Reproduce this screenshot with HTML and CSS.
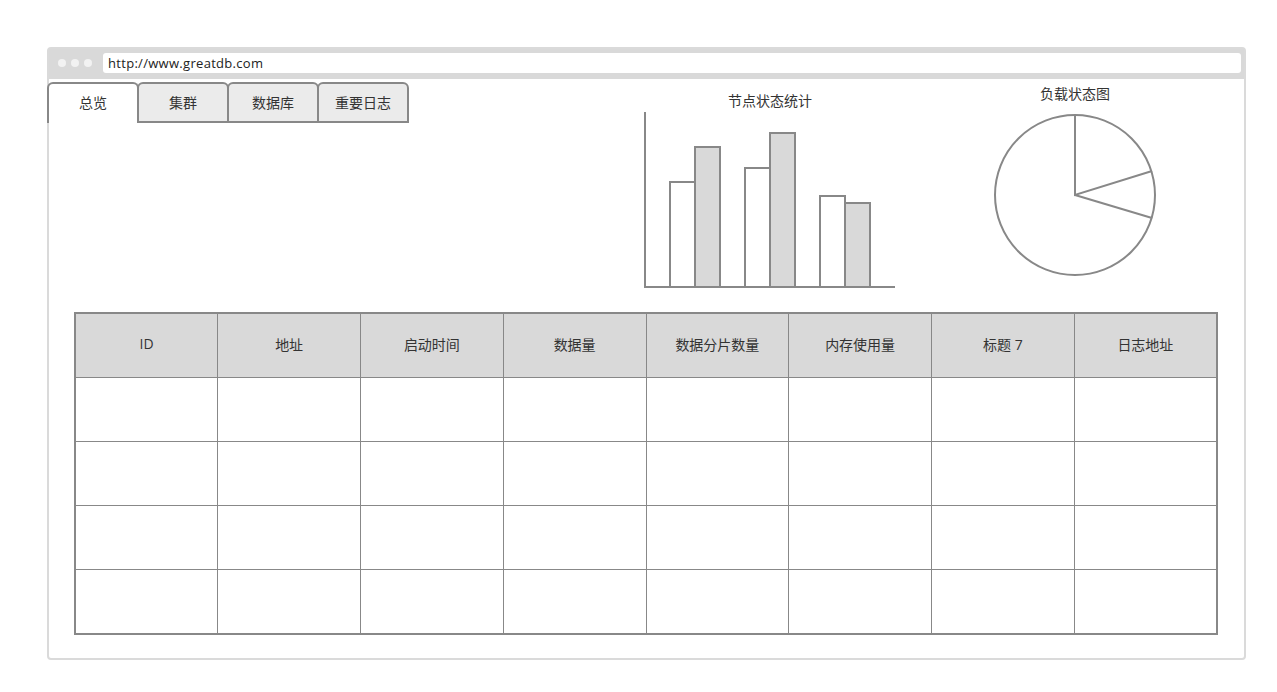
FILE: index.html
```html
<!DOCTYPE html>
<html lang="zh">
<head>
<meta charset="utf-8">
<title>GreatDB</title>
<link rel="stylesheet" href="styles.css">
</head>
<body>
<div class="frame">
  <div class="topbar">
    <div class="dots"><span class="dot"></span><span class="dot"></span><span class="dot"></span></div>
    <div class="url">http://www.greatdb.com</div>
  </div>
  <div class="content">
    <div class="top">
      <div class="tabs">
        <div class="tab active">总览</div>
        <div class="tab">集群</div>
        <div class="tab">数据库</div>
        <div class="tab">重要日志</div>
      </div>
      <div class="barchart">
        <div class="title">节点状态统计</div>
        <svg class="bars" width="260" height="180" viewBox="0 0 260 180">
          <g stroke="#888" stroke-width="2">
            <rect x="30" y="72" width="25" height="105" fill="#fff"/>
            <rect x="55" y="37" width="25" height="140" fill="#d9d9d9"/>
            <rect x="105" y="58" width="25" height="119" fill="#fff"/>
            <rect x="130" y="23" width="25" height="154" fill="#d9d9d9"/>
            <rect x="180" y="86" width="25" height="91" fill="#fff"/>
            <rect x="205" y="93" width="25" height="84" fill="#d9d9d9"/>
            <polyline points="5,2 5,177 255,177" fill="none"/>
          </g>
        </svg>
      </div>
      <div class="piechart">
        <div class="title">负载状态图</div>
        <svg class="pie" width="170" height="180" viewBox="0 0 170 180">
          <g stroke="#888" stroke-width="2" fill="none">
            <circle cx="85" cy="92" r="80"/>
            <polyline points="85,12 85,92 162,68"/>
            <line x1="85" y1="92" x2="162" y2="115"/>
          </g>
        </svg>
      </div>
    </div>
    <table class="grid">
      <thead>
        <tr><th>ID</th><th>地址</th><th>启动时间</th><th>数据量</th><th>数据分片数量</th><th>内存使用量</th><th>标题 7</th><th>日志地址</th></tr>
      </thead>
      <tbody>
        <tr><td></td><td></td><td></td><td></td><td></td><td></td><td></td><td></td></tr>
        <tr><td></td><td></td><td></td><td></td><td></td><td></td><td></td><td></td></tr>
        <tr><td></td><td></td><td></td><td></td><td></td><td></td><td></td><td></td></tr>
        <tr><td></td><td></td><td></td><td></td><td></td><td></td><td></td><td></td></tr>
      </tbody>
    </table>
  </div>
</div>
</body>
</html>
```
FILE: styles.css
```css
html, body {
  margin: 0;
  padding: 0;
  background: #fff;
}
body {
  padding: 47px 0 0 47px;
  font-family: "Open Sans", "Noto Sans CJK SC", sans-serif;
  color: #333;
}
.frame {
  width: 1195px;
  height: 609px;
  border: 2px solid #dadada;
  border-radius: 4px;
  display: flex;
  flex-direction: column;
}
.topbar {
  height: 30px;
  background: #d9d9d9;
  display: flex;
  align-items: flex-start;
  padding: 4px 3px 0 9px;
  box-sizing: border-box;
}
.dots {
  display: flex;
  gap: 5px;
  margin-top: 6px;
  margin-right: 11px;
}
.dot {
  width: 8px;
  height: 8px;
  border-radius: 50%;
  background: #f2f2f2;
}
.url {
  flex: 1;
  height: 20px;
  background: #fff;
  border-radius: 3px;
  padding-left: 5px;
  font-family: "Open Sans", sans-serif;
  font-size: 13px;
  letter-spacing: 0.3px;
  line-height: 20px;
  color: #222;
}
.content {
  flex: 1;
  display: flex;
  flex-direction: column;
}
.top {
  height: 233px;
  display: flex;
  align-items: flex-start;
}
.tabs {
  display: flex;
  margin-left: -2px;
  margin-top: 3px;
  width: 362px;
}
.tab {
  width: 92px;
  height: 41px;
  box-sizing: border-box;
  border: 2px solid #888;
  border-radius: 6px 6px 0 0;
  background: #ebebeb;
  font-size: 14px;
  line-height: 37px;
  text-align: center;
  color: #333;
  font-family: "Noto Sans CJK SC", sans-serif;
}
.tab + .tab {
  margin-left: -2px;
}
.tab.active {
  background: #fff;
  border-bottom: none;
  position: relative;
  z-index: 1;
}
.barchart {
  margin-left: 231px;
  margin-top: 11px;
  width: 260px;
}
.piechart {
  margin-left: 90px;
  margin-top: 4px;
  width: 170px;
}
.title {
  font-family: "Noto Sans CJK SC", sans-serif;
  font-size: 14px;
  line-height: 20px;
  text-align: center;
  color: #333;
}
.bars, .pie {
  display: block;
}
.grid {
  margin-left: 25px;
  width: 1144px;
  border-collapse: collapse;
  table-layout: fixed;
  border: 2px solid #888;
}
.grid th, .grid td {
  border: 1px solid #888;
  height: 63px;
  padding: 0;
  text-align: center;
  font-weight: normal;
  font-size: 14px;
  color: #333;
  font-family: "Open Sans", "Noto Sans CJK SC", sans-serif;
}
.grid th {
  background: #d9d9d9;
  height: 59px;
  padding-bottom: 4px;
}
```
